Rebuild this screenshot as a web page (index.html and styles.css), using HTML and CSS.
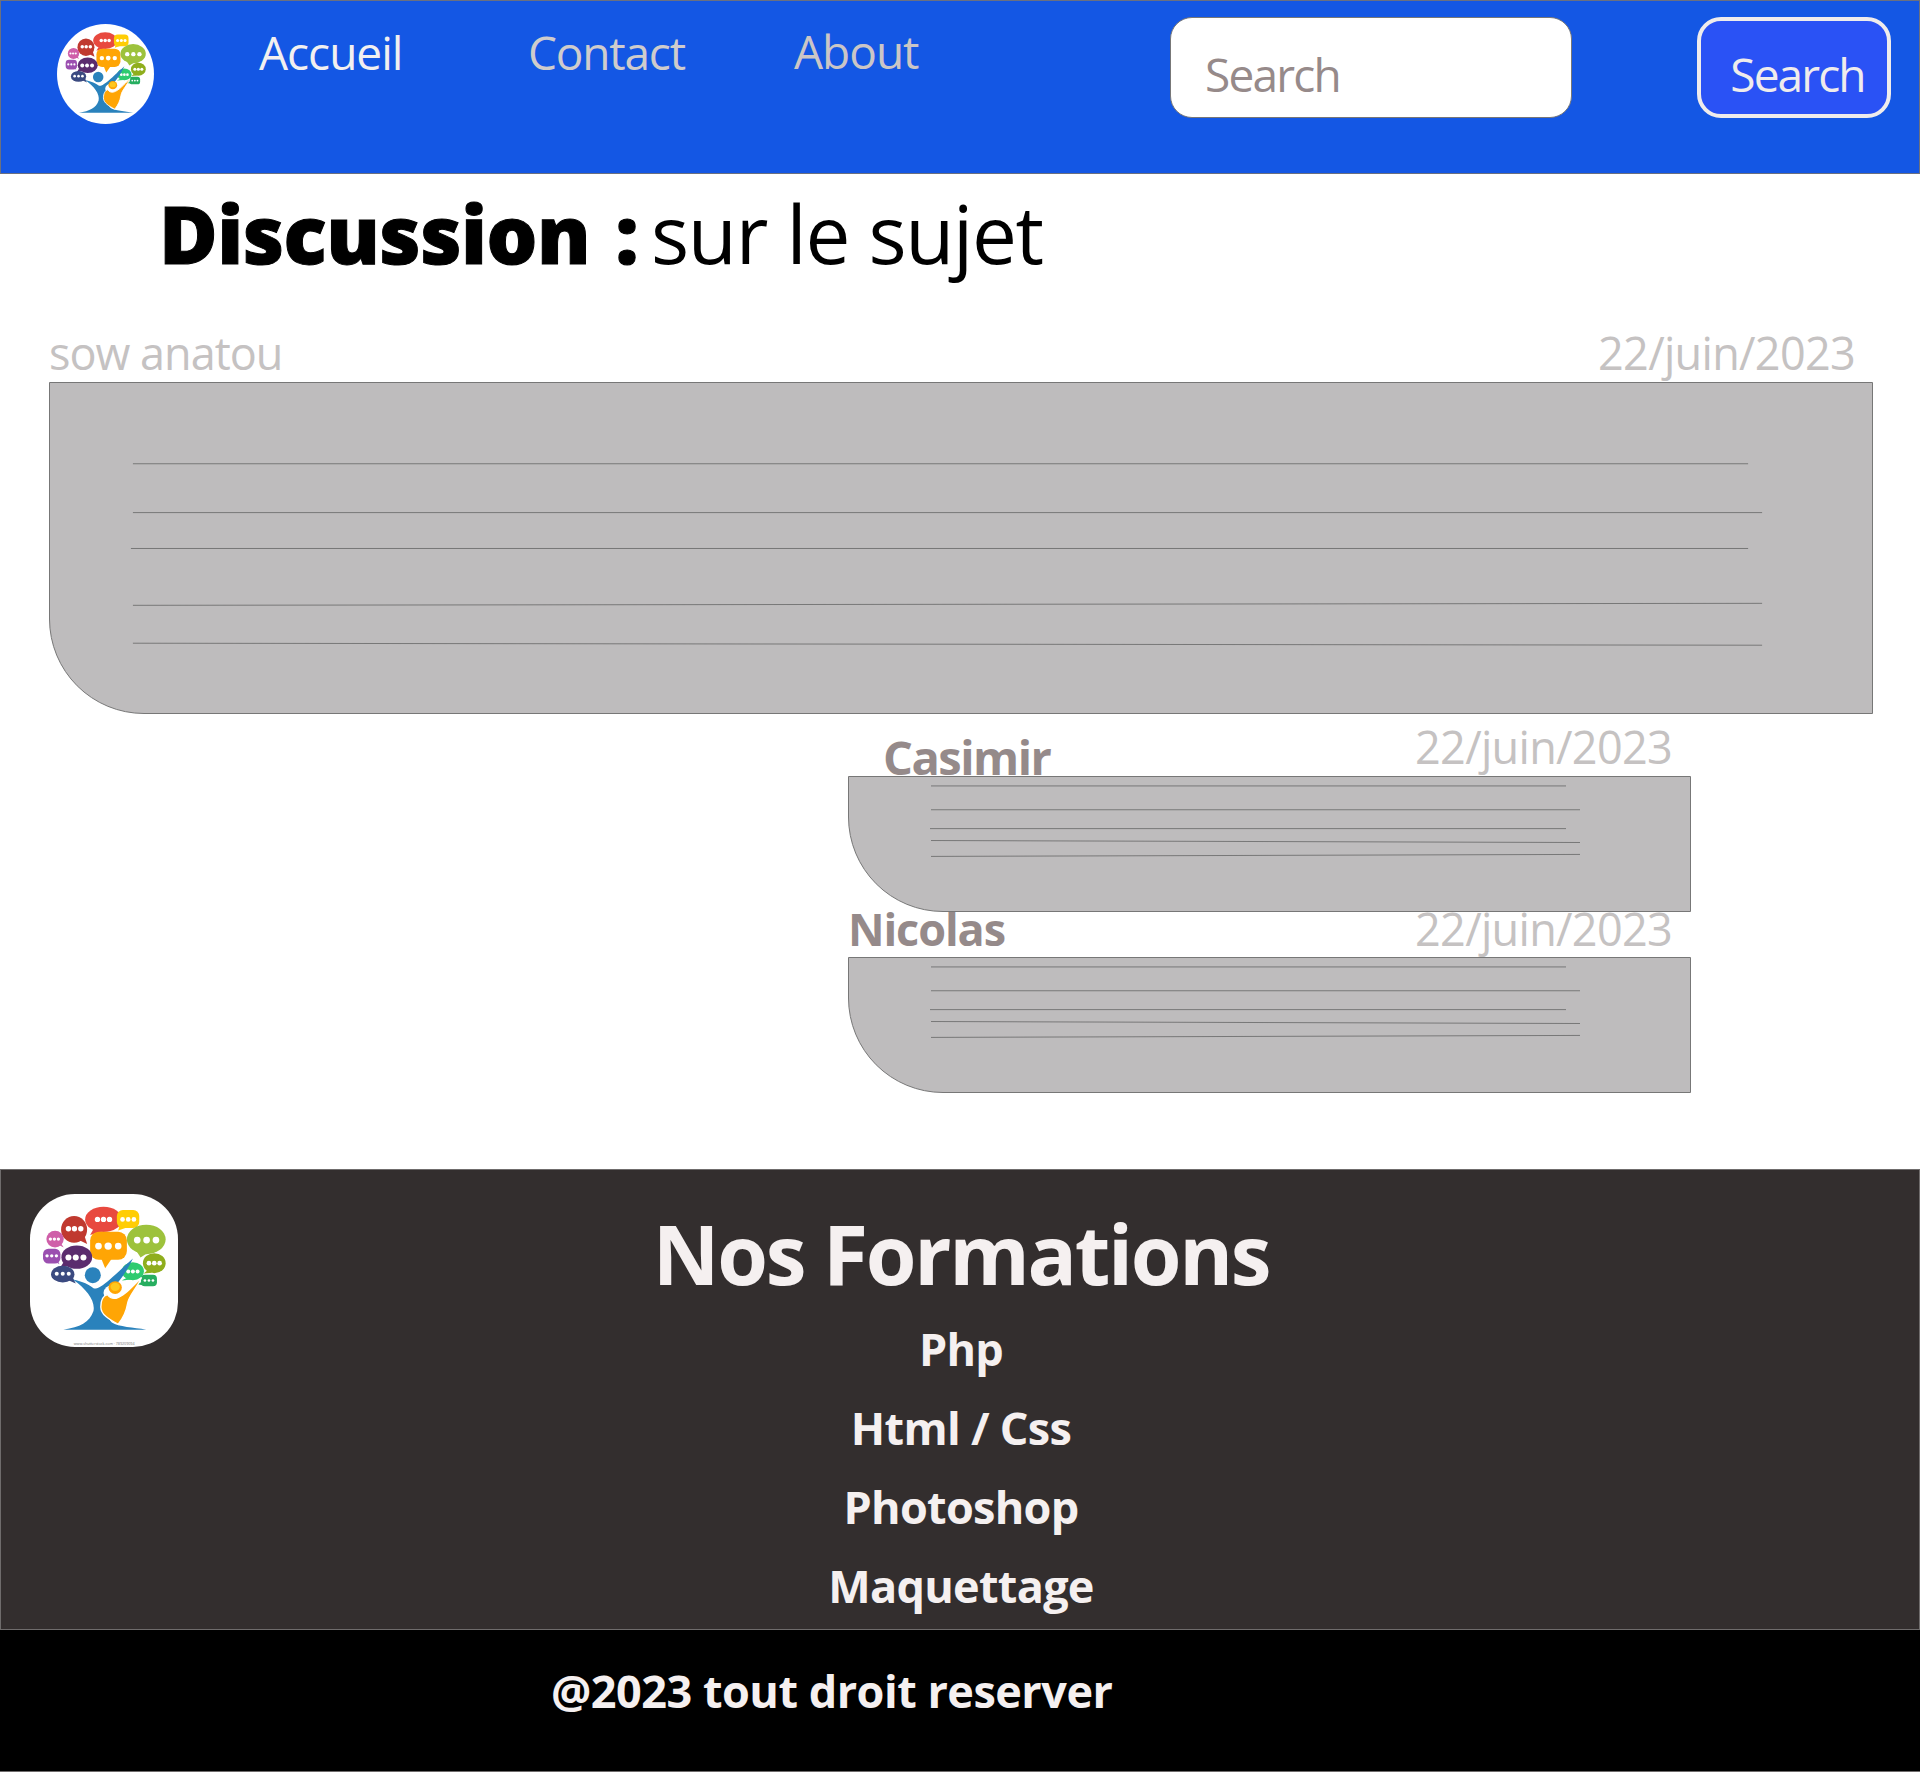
FILE: index.html
```html
<!DOCTYPE html>
<html lang="fr">
<head>
    <meta charset="UTF-8">
    <title>Discussion</title>
    <link rel="stylesheet" href="styles.css">
</head>
<body>

<svg class="defs" width="0" height="0">
    <symbol id="logo" viewBox="0 0 443 458">
        <!-- bubbles -->
        <g fill="#e8493f"><ellipse cx="220" cy="76" rx="55" ry="38"/><path d="M190 105l-10 18 38-12z"/></g>
        <g fill="#c0392f"><ellipse cx="132" cy="106" rx="39" ry="40"/><path d="M140 135l31 15-12-38z"/></g>
        <g fill="#ffcd05"><rect x="260" y="48" width="67" height="54" rx="18"/><path d="M268 95l-4 14 30-10z"/></g>
        <g fill="#ffa505"><rect x="180" y="113" width="110" height="84" rx="26"/><path d="M212 190l13 32 22-32z"/></g>
        <g fill="#9dc23c"><ellipse cx="348" cy="136" rx="58" ry="44"/><path d="M318 170l13 20 22-14z"/></g>
        <g fill="#8fae1d"><ellipse cx="372" cy="207" rx="34" ry="30"/><path d="M352 228l-12 10 26-2z"/></g>
        <g fill="#2ecb70"><ellipse cx="308" cy="231" rx="33" ry="27"/><path d="M292 250l-18 9 30-3z"/></g>
        <g fill="#27ae60"><rect x="332" y="242" width="48" height="34" rx="12"/><path d="M338 262l-18 8 22 4z"/></g>
        <g fill="#cf5fa9"><ellipse cx="75" cy="135" rx="26" ry="25"/><path d="M85 152l16 8-12-18z"/></g>
        <g fill="#9b4fb0"><rect x="39" y="164" width="52" height="44" rx="16"/><path d="M72 200l16 10-8-18z"/></g>
        <g fill="#5b2c6e"><ellipse cx="140" cy="189" rx="46" ry="35"/><path d="M100 205l-10 16 26-6z"/></g>
        <g fill="#3b4a80"><ellipse cx="98" cy="240" rx="35" ry="25"/><path d="M115 258l22 10-10-20z"/></g>
        <!-- dots -->
        <g fill="#fff">
            <circle cx="202" cy="76" r="8"/><circle cx="220" cy="76" r="8"/><circle cx="238" cy="76" r="8"/>
            <circle cx="115" cy="104" r="8"/><circle cx="133" cy="104" r="8"/><circle cx="152" cy="104" r="8"/>
            <circle cx="277" cy="76" r="7"/><circle cx="294" cy="76" r="7"/><circle cx="311" cy="76" r="7"/>
            <circle cx="205" cy="156" r="10"/><circle cx="234" cy="156" r="11"/><circle cx="264" cy="156" r="10"/>
            <circle cx="321" cy="138" r="10"/><circle cx="349" cy="138" r="10"/><circle cx="377" cy="138" r="10"/>
            <circle cx="356" cy="207" r="7"/><circle cx="372" cy="207" r="7"/><circle cx="388" cy="207" r="7"/>
            <circle cx="294" cy="232" r="6"/><circle cx="308" cy="232" r="6"/><circle cx="322" cy="232" r="6"/>
            <circle cx="344" cy="259" r="4"/><circle cx="356" cy="259" r="4"/><circle cx="368" cy="259" r="4"/>
            <circle cx="61" cy="135" r="5"/><circle cx="73" cy="135" r="5"/><circle cx="85" cy="135" r="5"/>
            <circle cx="51" cy="185" r="5"/><circle cx="65" cy="185" r="5"/><circle cx="79" cy="185" r="5"/>
            <circle cx="115" cy="190" r="9"/><circle cx="137" cy="190" r="9"/><circle cx="160" cy="190" r="9"/>
            <circle cx="80" cy="239" r="6"/><circle cx="98" cy="239" r="6"/><circle cx="116" cy="239" r="6"/>
        </g>
        <!-- figures -->
        <circle cx="188" cy="243" r="24" fill="#2a82bc"/>
        <path fill="#2a82bc" d="M128 256C158 262 178 272 190 282C205 288 225 270 308 193C285 240 262 270 240 290C218 312 222 360 245 385C265 398 310 400 348 406L100 406C150 398 178 385 190 350C196 320 170 285 128 256Z"/>
        <ellipse cx="250" cy="296" rx="30" ry="24" fill="#fff"/>
        <path fill="#ffa505" stroke="#fff" stroke-width="4" d="M212 338C212 318 220 304 232 301C238 310 246 314 258 312C282 306 305 278 334 250C318 285 296 304 292 328C288 352 280 370 264 390C238 376 212 362 212 338Z"/>
        <ellipse cx="255" cy="280" rx="20" ry="19" fill="#ffa505"/>
        <ellipse cx="255" cy="278" rx="14" ry="12" fill="#ffc81e"/>
    </symbol>
</svg>

<header class="topbar">
    <svg class="topbar-logo"><use href="#logo"/></svg>
    <nav class="menu">
        <a class="menu-home" href="#">Accueil</a>
        <a class="menu-contact" href="#">Contact</a>
        <a class="menu-about" href="#">About</a>
    </nav>
    <input class="search-input" type="text" placeholder="Search">
    <button class="search-btn" type="button">Search</button>
</header>

<main class="discussion">
    <h1 class="discussion-title"><strong>Discussion :</strong><span>sur le sujet</span></h1>

    <section class="post">
        <div class="post-head">
            <span class="post-author">sow anatou</span>
            <span class="post-date">22/juin/2023</span>
        </div>
        <div class="post-body">
            <svg class="post-lines" viewBox="0 0 1824 331" preserveAspectRatio="none">
                <line x1="83" y1="81" x2="1700" y2="81"/>
                <line x1="83" y1="130" x2="1714" y2="130"/>
                <line x1="81" y1="166" x2="1700" y2="166"/>
                <line x1="83" y1="223" x2="1714" y2="221"/>
                <line x1="83" y1="261" x2="1714" y2="263"/>
            </svg>
        </div>
    </section>

    <section class="reply reply-first">
        <div class="post-head">
            <span class="reply-author reply-author-casimir">Casimir</span>
            <span class="post-date">22/juin/2023</span>
        </div>
        <div class="reply-body">
            <svg class="post-lines" viewBox="0 0 841 135" preserveAspectRatio="none">
                <line x1="82" y1="9" x2="717" y2="9"/>
                <line x1="82" y1="33" x2="731" y2="33"/>
                <line x1="81" y1="52" x2="717" y2="52"/>
                <line x1="82" y1="64" x2="731" y2="66"/>
                <line x1="82" y1="80" x2="731" y2="78"/>
            </svg>
        </div>
    </section>

    <section class="reply">
        <div class="post-head">
            <span class="reply-author reply-author-nicolas">Nicolas</span>
            <span class="post-date">22/juin/2023</span>
        </div>
        <div class="reply-body">
            <svg class="post-lines" viewBox="0 0 841 135" preserveAspectRatio="none">
                <line x1="82" y1="9" x2="717" y2="9"/>
                <line x1="82" y1="33" x2="731" y2="33"/>
                <line x1="81" y1="52" x2="717" y2="52"/>
                <line x1="82" y1="64" x2="731" y2="66"/>
                <line x1="82" y1="80" x2="731" y2="78"/>
            </svg>
        </div>
    </section>
</main>

<footer>
    <div class="formations">
        <div class="formations-logo">
            <svg class="formations-logo-img" viewBox="0 0 443 458">
                <use href="#logo" width="443" height="458"/>
                <text class="logo-credit" x="222" y="452" text-anchor="middle">www.shutterstock.com · 789209094</text>
            </svg>
        </div>
        <div class="formations-list">
            <h2>Nos Formations</h2>
            <a href="#">Php</a>
            <a href="#">Html / Css</a>
            <a href="#">Photoshop</a>
            <a href="#">Maquettage</a>
        </div>
    </div>
    <div class="copyright">@2023 tout droit reserver</div>
</footer>

</body>
</html>
```

FILE: styles.css
```css
body {
    margin: 0;
    font-family: "Open Sans", "Noto Sans", sans-serif;
    background: white;
}
a {
    text-decoration: none;
}
.defs {
    position: absolute;
}
.logo-credit {
    font-size: 11px;
    fill: #777;
}

/* top bar */
.topbar {
    display: flex;
    align-items: flex-start;
    box-sizing: border-box;
    height: 174px;
    padding: 16px 27px 0 56px;
    background: #1457e4;
    border: 1px solid #6b7080;
}
.topbar-logo {
    width: 97px;
    height: 100px;
    margin-top: 7px;
    background: white;
    border-radius: 50%;
}
.menu {
    display: grid;
    grid-template-columns: 269px 266px 1fr;
    width: 911px;
    margin-left: 105px;
    font-size: 46px;
    line-height: 60px;
}
.menu-home {
    color: #f2f0f0;
    letter-spacing: -1px;
    margin-top: 5px;
}
.menu-contact {
    color: #cfcccc;
    letter-spacing: -1.2px;
    margin-top: 5px;
}
.menu-about {
    color: #cbc6c6;
    letter-spacing: -1px;
    margin-top: 4px;
}
.search-input {
    box-sizing: border-box;
    width: 402px;
    height: 101px;
    padding: 12px 20px 0 34px;
    border: 1px solid #777;
    border-radius: 22px;
    background: white;
    font-family: inherit;
    font-size: 46px;
    letter-spacing: -1.8px;
}
.search-input::placeholder {
    color: #968a8a;
    opacity: 1;
}
.search-btn {
    box-sizing: border-box;
    width: 194px;
    height: 101px;
    margin-left: 125px;
    padding: 12px 0 0 7px;
    border: 4px solid #efecec;
    border-radius: 24px;
    background: #2a52f5;
    color: #efecec;
    font-family: inherit;
    font-size: 46px;
    letter-spacing: -1.9px;
}

/* discussion */
.discussion {
    padding-bottom: 76px;
}
.discussion-title {
    display: flex;
    gap: 13px;
    margin: 14px 0 58px 159px;
    color: black;
    font-size: 80px;
    font-weight: normal;
    line-height: 90px;
}
.discussion-title strong {
    font-weight: 800;
    letter-spacing: -0.5px;
    word-spacing: 5px;
    -webkit-text-stroke: 1px black;
}
.discussion-title span {
    letter-spacing: -1.3px;
}
.post {
    margin: 0 47px 0 49px;
}
.post-head {
    display: flex;
    justify-content: space-between;
    height: 46px;
    padding-right: 18px;
    font-size: 45px;
    line-height: 33px;
}
.post-author {
    color: #c5c2c2;
    letter-spacing: -1px;
}
.post-date {
    color: #c5c2c2;
    letter-spacing: -0.7px;
}
.post-body {
    box-sizing: border-box;
    height: 332px;
    background: #bebcbd;
    border: 1px solid #777;
    border-bottom-left-radius: 95px;
}
.post-lines {
    display: block;
    width: 100%;
    height: 100%;
    stroke: #777;
    stroke-width: 1;
}
.reply {
    width: 843px;
    margin-left: 848px;
}
.reply-first {
    margin-top: 16px;
}
.reply .post-head {
    padding-right: 19px;
    height: 45px;
}
.reply-first .post-head {
    height: 46px;
}
.reply-author {
    color: #958a8a;
    font-weight: 700;
    letter-spacing: -0.8px;
}
.reply-author-casimir {
    margin: 11px 0 0 35px;
    font-size: 47px;
    letter-spacing: -1.5px;
}
.reply-author-nicolas {
    letter-spacing: -1.1px;
}
.reply-body {
    box-sizing: border-box;
    height: 136px;
    background: #bebcbd;
    border: 1px solid #777;
    border-bottom-left-radius: 95px;
}

/* footer */
.formations {
    display: grid;
    grid-template-columns: 178px 1fr 178px;
    box-sizing: border-box;
    height: 461px;
    background: #332e2e;
    border: 1px solid #6f6c6c;
    color: #f5f0f0;
}
.formations-logo {
    padding: 24px 0 0 29px;
}
.formations-logo-img {
    display: block;
    width: 148px;
    height: 153px;
    background: white;
    border-radius: 45px;
}
.formations-list {
    display: flex;
    flex-direction: column;
    align-items: center;
    padding-left: 2px;
}
.formations-list h2 {
    margin: 33px 0 6px;
    font-size: 82px;
    font-weight: 700;
    letter-spacing: -2.3px;
    line-height: 100px;
}
.formations-list a {
    color: #f5f0f0;
    font-size: 45px;
    font-weight: 700;
    letter-spacing: -0.7px;
    line-height: 79px;
}
.copyright {
    box-sizing: border-box;
    height: 142px;
    padding: 26px 0 0 551px;
    background: black;
    border-bottom: 1px solid #6f6c6c;
    color: #f5f0f0;
    font-size: 45px;
    font-weight: 700;
    letter-spacing: -0.5px;
    line-height: 70px;
}
```
